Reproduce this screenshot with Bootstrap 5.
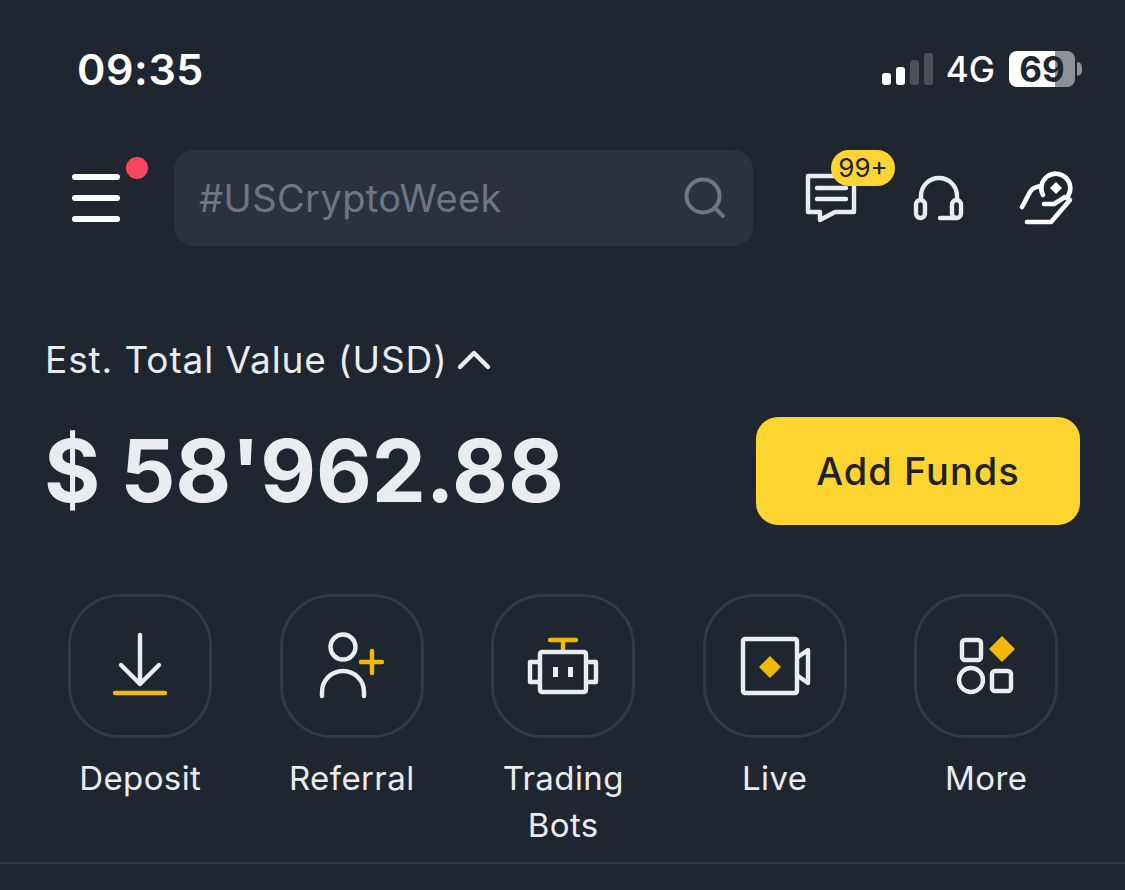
<!DOCTYPE html>
<html lang="en">
<head>
  <meta charset="UTF-8" />
  <meta name="viewport" content="width=device-width, initial-scale=1" />
  <title>Wallet</title>
  <link href="https://cdn.jsdelivr.net/npm/bootstrap@5.3.0/dist/css/bootstrap.min.css" rel="stylesheet">
  <style>
    html, body { height: 100%; overflow: hidden; }
    body { background: #1f2630; color: #eaecef; font-family: "Inter", "Liberation Sans", sans-serif; }
    svg { display: block; fill: none; stroke-linecap: round; stroke-linejoin: round; }
    .ln { stroke: #eaecef; stroke-width: 4.4; }
    .gold { stroke: #f0b90b; stroke-width: 4.4; }
    .gold-fill { fill: #f0b90b; }
    .ln-bold { stroke: #fff; stroke-width: 4.6; }

    .status-row { height: 50px; margin-top: 44px; padding: 0 43px 0 77px; }
    .clock { font-size: 43px; font-weight: 600; color: #fff; line-height: 50px; letter-spacing: .6px; }
    .sig-wrap { gap: 5px; margin-top: -1px; }
    .sig { width: 9px; border-radius: 3px; background: #fff; }
    .sig-off { background: #4c5058; }
    .net { font-size: 35px; font-weight: 500; color: #fff; line-height: 50px; margin: 0 14px 0 13px; }
    .batt { width: 66px; height: 36px; border-radius: 8px; background: linear-gradient(90deg, #fff 70%, #8e9196 70%); color: #1f2630; font-size: 35px; font-weight: 700; line-height: 36px; text-align: center; }
    .nub { width: 5px; height: 14px; border-radius: 0 5px 5px 0; background: #8e9196; margin-left: 2px; }

    .top-row { margin-top: 56px; height: 96px; padding-left: 72px; }
    .burger { width: 48px; height: 48px; margin-right: 54px; }
    .burger i { display: block; height: 6px; border-radius: 3px; background: #fff; }
    .dot { width: 22px; height: 22px; border-radius: 50%; background: #f6465d; top: -17px; left: 54px; }
    .search-box { width: 579px; height: 96px; border-radius: 20px; background: #2b323d; padding: 0 27px 0 25px; font-size: 38px; letter-spacing: .4px; color: #6d7683; }
    .tools { margin-left: 48px; }
    .count { top: -18px; left: 30px; width: 64px; height: 36px; border-radius: 18px; background: #fcd535; color: #1e2329; font-size: 26px; line-height: 36px; text-align: center; }

    .est { margin-top: 92px; padding-left: 45px; font-size: 37px; letter-spacing: .9px; line-height: 44px; }
    .value-row { margin-top: 35px; padding: 0 45px 0 44px; height: 108px; }
    .total { font-size: 86px; font-weight: 700; line-height: 108px; color: #eaecef; letter-spacing: -.1px; }
    .btn.add-btn { width: 324px; height: 108px; border-radius: 22px; border: 0; background: #fdd430; color: #1e2329; font-size: 38px; letter-spacing: 1px; font-weight: 500; }

    .tiles { display: grid; grid-template-columns: repeat(5, 211.5px); margin: 69px 0 0 34.5px; }
    .tile { width: 144px; height: 144px; border: 3px solid #343a45; border-radius: 52px; }
    .tile-name { font-size: 33px; letter-spacing: .4px; line-height: 47px; margin-top: 17px; padding: 0 30px; }
    .rule { position: absolute; top: 862px; left: 0; right: 0; height: 2px; background: #343a45; }
  </style>
</head>
<body>

  <div class="status-row d-flex align-items-center">
    <div class="clock me-auto">09:35</div>
    <div class="d-flex align-items-end sig-wrap">
      <div class="sig" style="height:12px"></div>
      <div class="sig" style="height:18px"></div>
      <div class="sig sig-off" style="height:25px"></div>
      <div class="sig sig-off" style="height:32px"></div>
    </div>
    <div class="net">4G</div>
    <div class="batt">69</div>
    <div class="nub"></div>
  </div>

  <div class="top-row d-flex align-items-center">
    <div class="burger position-relative d-flex flex-column justify-content-between">
      <i></i><i></i><i></i>
      <span class="dot position-absolute"></span>
    </div>
    <div class="search-box d-flex align-items-center justify-content-between">
      <span>#USCryptoWeek</span>
      <svg width="42" height="42" viewBox="0 0 42 42"><circle cx="19" cy="19" r="16.5" stroke="#6d7683" stroke-width="4"/><path d="M31 31l8 8" stroke="#6d7683" stroke-width="4"/></svg>
    </div>
    <div class="tools d-flex align-items-center">
      <div class="position-relative me-auto">
        <svg width="60" height="60" viewBox="0 0 60 60"><path class="ln" d="M7 8v36h12v8l15-8h19V8z"/><path class="ln" d="M16 20h29M16 31h29"/></svg>
        <span class="count position-absolute">99+</span>
      </div>
      <svg class="ms-5" width="60" height="60" viewBox="0 0 60 60"><path class="ln" d="M12 32v-4a18 18 0 0 1 36 0v4"/><rect class="ln" x="7" y="32" width="9" height="18" rx="4.5"/><rect class="ln" x="43" y="32" width="9" height="18" rx="4.5"/><path class="ln" d="M31 50h16"/></svg>
      <svg class="ms-5" width="60" height="60" viewBox="0 0 60 60"><path class="ln-bold" d="M26 27A14.5 14.5 0 1 1 51 28"/><path class="ln-bold" d="M5 39l8-15c1-2 4-5 11-6"/><path class="ln-bold" d="M10 54h24l19-22-5-3-11 7H27"/><path d="M39 14l6 6-6 6-6-6z" fill="#fff"/></svg>
    </div>
  </div>

  <div class="est d-flex align-items-center">
    <span>Est. Total Value (USD)</span>
    <svg class="ms-2" width="36" height="22" viewBox="0 0 36 22"><path class="ln" d="M4 18L18 4l14 14"/></svg>
  </div>

  <div class="value-row d-flex align-items-center justify-content-between">
    <div class="total">$ 58'962.88</div>
    <button type="button" class="btn add-btn">Add Funds</button>
  </div>

  <div class="tiles">
    <div class="d-flex flex-column align-items-center text-center">
      <div class="tile d-flex align-items-center justify-content-center">
        <svg width="80" height="80" viewBox="0 0 80 80"><path class="ln" d="M40 9v49M21 39l19 19 19-19"/><path class="gold" d="M15 67h50"/></svg>
      </div>
      <div class="tile-name">Deposit</div>
    </div>
    <div class="d-flex flex-column align-items-center text-center">
      <div class="tile d-flex align-items-center justify-content-center">
        <svg width="80" height="80" viewBox="0 0 80 80"><circle class="ln" cx="31" cy="21" r="12.5"/><path class="ln" d="M10 70v-4a21 21 0 0 1 42 0v4"/><path class="gold" d="M49 36h21M60 25v22"/></svg>
      </div>
      <div class="tile-name">Referral</div>
    </div>
    <div class="d-flex flex-column align-items-center text-center">
      <div class="tile d-flex align-items-center justify-content-center">
        <svg width="80" height="80" viewBox="0 0 80 80"><path class="gold" d="M27 14h26M40 14v11"/><rect class="ln" x="17" y="26" width="46" height="40" rx="2"/><path class="ln" d="M15 36H7v20h8M65 36h8v20h-8"/><rect x="30" y="41" width="5" height="10" fill="#eaecef"/><rect x="45" y="41" width="5" height="10" fill="#eaecef"/></svg>
      </div>
      <div class="tile-name">Trading Bots</div>
    </div>
    <div class="d-flex flex-column align-items-center text-center">
      <div class="tile d-flex align-items-center justify-content-center">
        <svg width="80" height="80" viewBox="0 0 80 80"><rect class="ln" x="8" y="13" width="54" height="54" rx="2"/><path class="ln" d="M63 31l10-7v33l-10-7"/><path class="gold-fill" d="M35 30l11 11-11 11-11-11z"/></svg>
      </div>
      <div class="tile-name">Live</div>
    </div>
    <div class="d-flex flex-column align-items-center text-center">
      <div class="tile d-flex align-items-center justify-content-center">
        <svg width="80" height="80" viewBox="0 0 80 80"><rect class="ln" x="16" y="14" width="19" height="20" rx="3"/><path class="gold-fill" d="M56 10l13 13-13 13-13-13z"/><circle class="ln" cx="25" cy="54" r="12"/><rect class="ln" x="46" y="45" width="19" height="20" rx="3"/></svg>
      </div>
      <div class="tile-name">More</div>
    </div>
  </div>

  <div class="rule"></div>

  <script src="https://cdn.jsdelivr.net/npm/bootstrap@5.3.0/dist/js/bootstrap.bundle.min.js"></script>
</body>
</html>
